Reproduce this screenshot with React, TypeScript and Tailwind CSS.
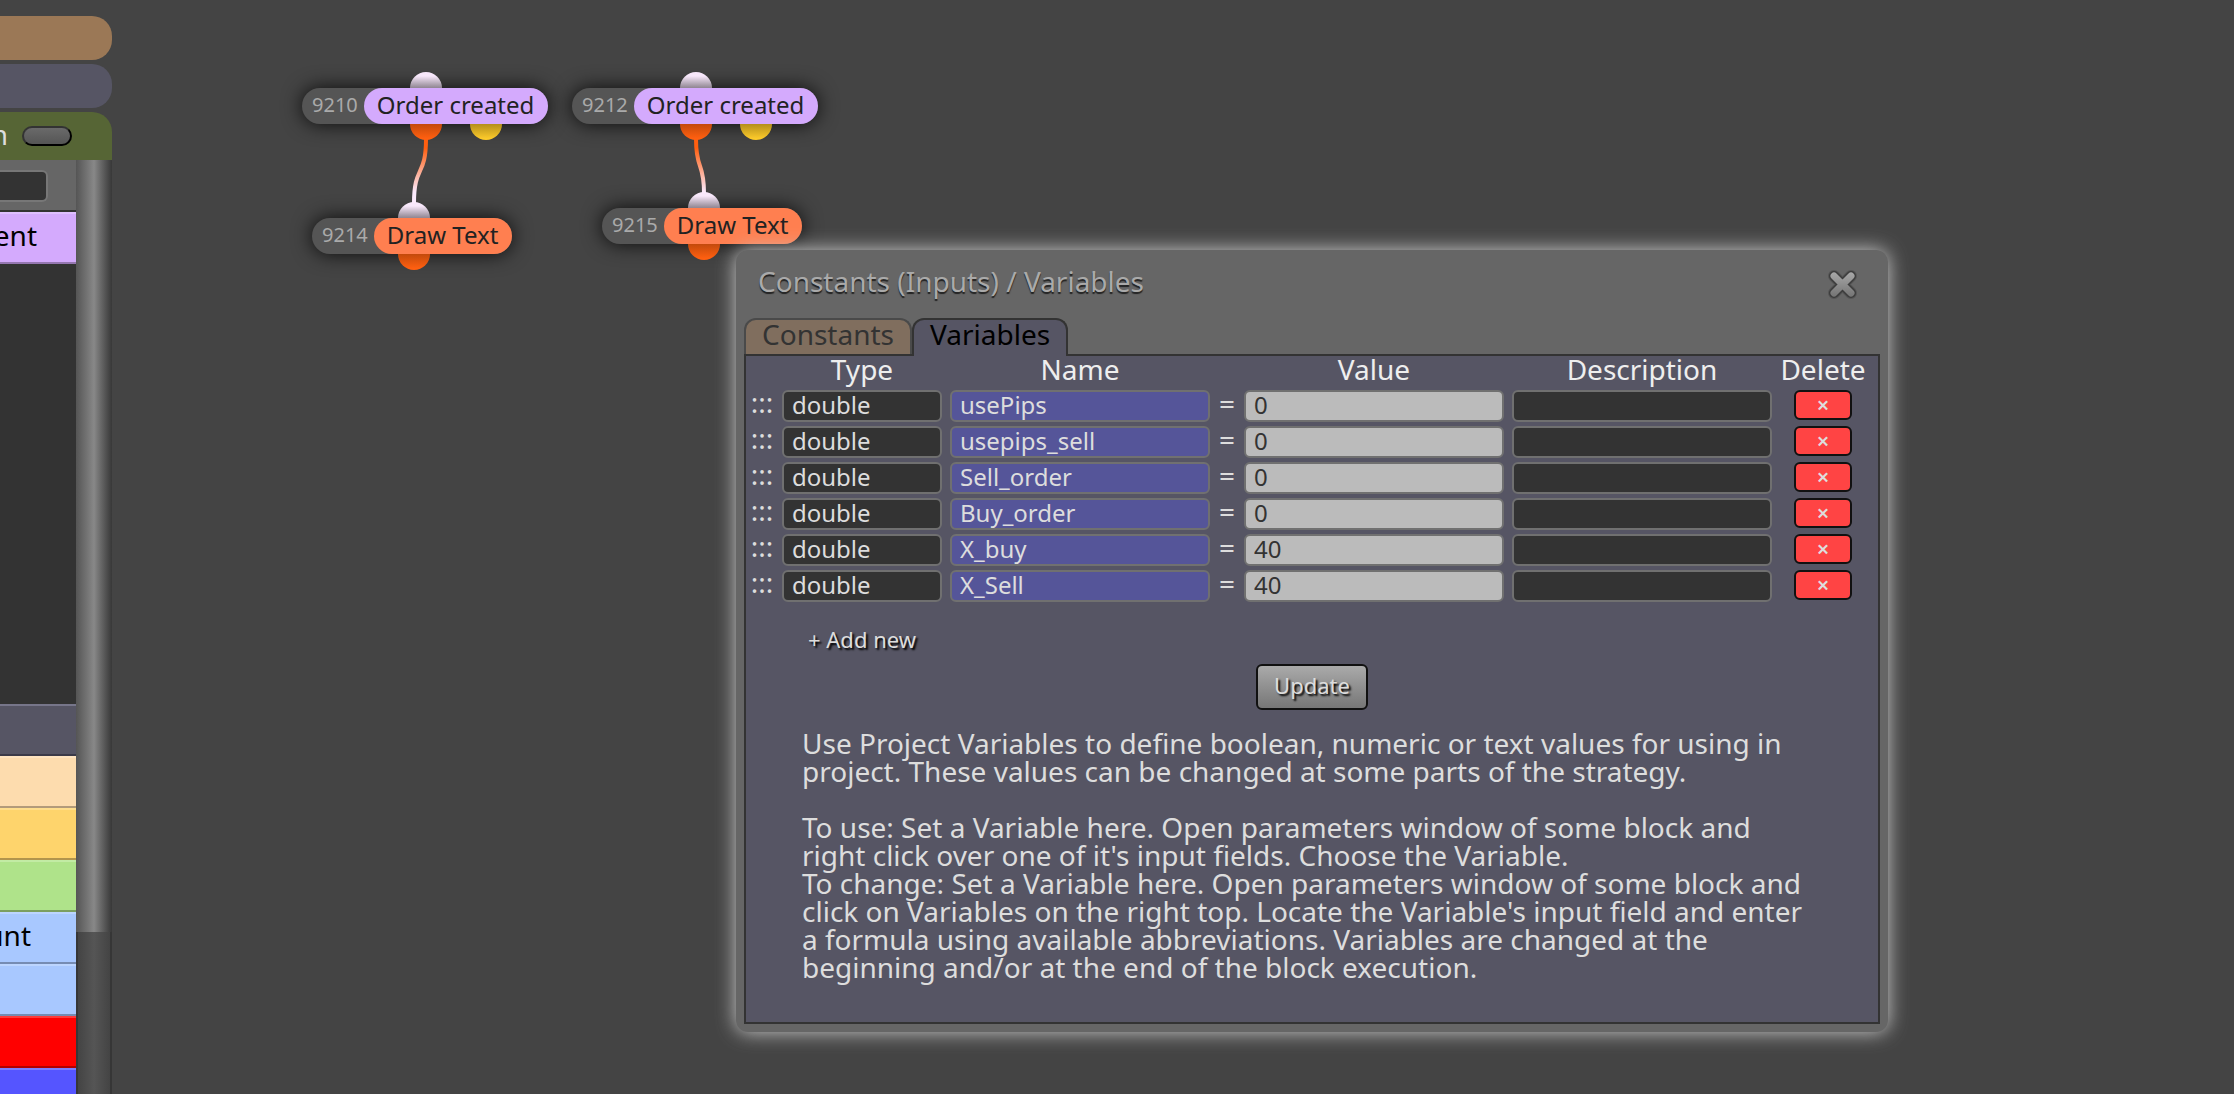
import React from 'react'
import clsx from 'clsx'

const variables = [
    { name: 'usePips', value: '0' },
    { name: 'usepips_sell', value: '0' },
    { name: 'Sell_order', value: '0' },
    { name: 'Buy_order', value: '0' },
    { name: 'X_buy', value: '40' },
    { name: 'X_Sell', value: '40' },
]

const groups = [
    { label: '', color: 'bg-[#565564] border-t-[#77768a] border-b-[#3b3a48]' },
    { label: '', color: 'bg-[#fddcae] border-t-[#ffe4c0] border-b-[#b39b7a]' },
    { label: '', color: 'bg-[#fed46c] border-t-[#ffde8c] border-b-[#b3954c]' },
    { label: '', color: 'bg-[#afe38a] border-t-[#c2eba4] border-b-[#7b9f61]' },
    { label: 'unt', color: 'bg-[#a8c8ff] border-t-[#bcd5ff] border-b-[#768cb3]' },
    { label: '', color: 'bg-[#a8c8ff] border-t-[#bcd5ff] border-b-[#768cb3]' },
    { label: '', color: 'bg-[#ff0000] border-t-[#ff3b3b] border-b-[#b30000]' },
    { label: '', color: 'bg-[#5555ff] border-t-[#7d7dff] border-b-[#3c3cb3]' },
]

function GroupRow({ label, color }: { label: string; color: string }) {
    return (
        <div className={clsx('flex h-[52px] shrink-0 items-center justify-end overflow-hidden border-y-2 pb-[6px] text-[28px] leading-8 text-black', color)}>
            <span className={label === 'ent' ? 'pr-[39px]' : 'pr-[45px]'}>{label}</span>
        </div>
    )
}

function Sidebar() {
    return (
        <aside className="flex w-28 shrink-0 flex-col pt-4">
            <div className="mb-1 h-11 shrink-0 rounded-r-[20px] bg-[#9b7856]" />
            <div className="mb-1 h-11 shrink-0 rounded-r-[20px] bg-[#565564]" />
            <div className="flex h-12 shrink-0 items-center justify-end gap-[14px] overflow-hidden rounded-tr-[20px] bg-[#566535] pr-10">
                <span className="pb-1 text-[28px] leading-8 text-[#dddddd]">n</span>
                <button
                    aria-label="Toggle section"
                    className="h-5 w-[50px] shrink-0 rounded-full border-2 border-t-[#333333] border-r-black border-b-black border-l-[#333333] bg-linear-to-b from-[#6a6a6a] to-[#555555]"
                />
            </div>

            <div className="flex min-h-0 flex-1">
                <div className="flex min-w-0 flex-1 flex-col overflow-hidden bg-[#333333]">
                    <div className="mb-[2px] h-[50px] shrink-0 bg-[#666666] pt-[10px] pr-7">
                        <input aria-label="Search blocks" className="h-8 w-full rounded-r-md border-2 border-l-0 border-[#777777] bg-[#333333]" />
                    </div>
                    <GroupRow label="ent" color="bg-[#d4aafd] border-t-[#dfbfff] border-b-[#9577b1]" />
                    <div className="h-[440px] shrink-0" />
                    {groups.map((group, i) => (
                        <GroupRow key={i} label={group.label} color={group.color} />
                    ))}
                </div>

                {/* Scrollbar */}
                <div className="w-9 shrink-0 border-x-2 border-[#363636] bg-linear-to-r from-[#444444] via-[#555555] to-[#444444]">
                    <div className="-mx-[2px] h-[772px] bg-linear-to-r from-[#555555] via-[#888888] to-[#383838]" />
                </div>
            </div>
        </aside>
    )
}

type BlockProps = {
    id: string
    label: string
    place: string
    color: string
    portX: string
    hasSecondOutput?: boolean
}

function Block({ id, label, place, color, portX, hasSecondOutput }: BlockProps) {
    return (
        <div className={clsx('absolute flex h-9 rounded-full bg-[#555555] shadow-[0_0_20px_rgba(0,0,0,0.85)]', place)}>
            <span className="pr-[6px] pl-[10px] text-xl leading-[34px] text-[#aaaaaa]">{id}</span>
            <span className={clsx('rounded-full pr-[14px] pl-[13px] text-2xl leading-[34px] text-[#222222]', color)}>{label}</span>
            <i className={clsx('absolute -top-4 h-4 w-8 rounded-t-full bg-linear-to-b from-[#f8e8fb] from-25% to-[#8f8591]', portX)} />
            <i className={clsx('absolute top-9 h-4 w-8 rounded-b-full bg-linear-to-b from-[#c34a0c] to-[#ff5f10] to-90%', portX)} />
            {hasSecondOutput && (
                <i className="absolute top-9 left-[168px] h-4 w-8 rounded-b-full bg-linear-to-b from-[#b48f1c] to-[#fbc92a] to-90%" />
            )}
        </div>
    )
}

function Wires() {
    return (
        <svg className="absolute top-0 left-0 h-[300px] w-[800px]" fill="none" strokeWidth="4">
            <defs>
                <linearGradient id="wire" gradientUnits="userSpaceOnUse" x1="0" y1="148" x2="0" y2="192">
                    <stop offset="0" stopColor="#ff5f10" />
                    <stop offset="1" stopColor="#fbeafd" />
                </linearGradient>
            </defs>
            <path d="M426 139C426 177 414 165 414 203" stroke="url(#wire)" />
            <path d="M696 139C696 171 704 161 704 193" stroke="url(#wire)" />
        </svg>
    )
}

function Field({ label, value, tone }: { label: string; value: string; tone: string }) {
    return (
        <input
            aria-label={label}
            defaultValue={value}
            className={clsx('block h-8 w-full rounded-md border-2 border-[#707070] px-2 pb-[3px] text-2xl leading-6', tone)}
        />
    )
}

function VariablesTable() {
    return (
        <table className="w-[1124px] table-fixed text-[28px] text-[#eeeeee]">
            <colgroup>
                <col className="w-8" />
                <col className="w-[168px]" />
                <col className="w-[268px]" />
                <col className="w-[26px]" />
                <col className="w-[268px]" />
                <col className="w-[268px]" />
                <col className="w-[94px]" />
            </colgroup>
            <thead>
                <tr className="h-8 align-top leading-[26px]">
                    <td />
                    <th className="font-normal">Type</th>
                    <th className="font-normal">Name</th>
                    <td />
                    <th className="font-normal">Value</th>
                    <th className="font-normal">Description</th>
                    <th className="font-normal">Delete</th>
                </tr>
            </thead>
            <tbody>
                {variables.map((row) => (
                    <tr key={row.name} className="h-9">
                        <td className="text-center align-top leading-7 text-[#dddddd]">:::</td>
                        <td className="px-1">
                            <Field label="Type" value="double" tone="bg-[#333333] text-[#dddddd]" />
                        </td>
                        <td className="px-1">
                            <Field label="Name" value={row.name} tone="bg-[#555599] text-[#dddddd]" />
                        </td>
                        <td className="text-center align-top leading-[30px] text-[#dddddd]">=</td>
                        <td className="px-1">
                            <Field label="Value" value={row.value} tone="bg-[#bbbbbb] text-[#333333]" />
                        </td>
                        <td className="px-1">
                            <Field label="Description" value="" tone="bg-[#333333] text-[#dddddd]" />
                        </td>
                        <td className="pb-[2px]">
                            <button
                                aria-label={`Delete ${row.name}`}
                                className="mx-auto block h-[30px] w-[58px] rounded-md border-2 border-[#111111] bg-[#ff4444] pb-[2px] text-[22px] leading-6 font-semibold text-[#dddddd]"
                            >
                                ×
                            </button>
                        </td>
                    </tr>
                ))}
            </tbody>
        </table>
    )
}

function CloseIcon() {
    return (
        <svg viewBox="0 0 30 30" className="size-[30px]" fill="none" strokeLinecap="round">
            <defs>
                <linearGradient id="close" gradientUnits="userSpaceOnUse" x1="0" y1="3" x2="0" y2="27">
                    <stop offset="0" stopColor="#a6a6a6" />
                    <stop offset="1" stopColor="#747474" />
                </linearGradient>
            </defs>
            <path d="M6 6L23 23M23 6L6 23" stroke="#555555" strokeWidth="12" />
            <path d="M6 6L23 23M23 6L6 23" stroke="#3c3c3c" strokeWidth="10" />
            <path d="M6 6L23 23M23 6L6 23" stroke="url(#close)" strokeWidth="7" />
        </svg>
    )
}

function VariablesDialog() {
    return (
        <section
            role="dialog"
            aria-labelledby="dialog-title"
            className="absolute top-[250px] left-[736px] w-[1152px] rounded-xl bg-[#666666] px-2 pb-2 shadow-[0_0_20px_#cccccc]"
        >
            <header className="flex h-[68px] items-start justify-between pr-[22px] pl-[14px]">
                <h2 id="dialog-title" className="text-[28px] leading-[62px] text-[#aaaaaa] [text-shadow:0_2px_1px_#222222]">
                    Constants (Inputs) / Variables
                </h2>
                <button aria-label="Close" className="mt-5">
                    <CloseIcon />
                </button>
            </header>

            <div role="tablist" className="flex items-start text-[28px] leading-7">
                <button role="tab" className="h-9 rounded-t-xl border-2 border-b-0 border-[#4a4a4a] bg-[#806e5e] px-4 pb-[6px] text-[#333333]">
                    Constants
                </button>
                <button role="tab" aria-selected="true" className="relative -mb-[2px] h-[38px] rounded-t-xl border-2 border-b-0 border-[#333333] bg-[#565564] px-4 pb-2 text-black">
                    Variables
                </button>
            </div>

            <div className="border-2 border-[#333333] bg-[#565564] pb-[41px]">
                <VariablesTable />
                <div className="px-[62px] pt-5 pb-[2px]">
                    <button className="block text-[22px] leading-[30px] text-[#dddddd] [text-shadow:2px_2px_2px_#000000]">+ Add new</button>
                </div>
                <button className="mx-auto mt-2 block h-[46px] rounded-md border-2 border-[#111111] bg-linear-to-b from-[#aaaaaa] to-[#777777] px-4 pb-1 text-[22px] leading-8 text-[#dddddd] [text-shadow:2px_2px_2px_#000000]">
                    Update
                </button>
                <div className="mt-[19px] pr-16 pl-14 text-[28px] leading-7 text-[#dddddd]">
                    <p className="mb-7">
                        Use Project Variables to define boolean, numeric or text values for using in project. These values can be
                        changed at some parts of the strategy.
                    </p>
                    <p>
                        To use: Set a Variable here. Open parameters window of some block and right click over one of it's input
                        fields. Choose the Variable.
                    </p>
                    <p>
                        To change: Set a Variable here. Open parameters window of some block and click on Variables on the right
                        top. Locate the Variable's input field and enter a formula using available abbreviations. Variables are
                        changed at the beginning and/or at the end of the block execution.
                    </p>
                </div>
            </div>
        </section>
    )
}

export default function App() {
    return (
        <div className="relative flex h-screen w-full overflow-hidden bg-[#444444] font-['Noto_Sans',sans-serif]">
            <Sidebar />

            {/* Block canvas */}
            <main>
                <Block id="9210" label="Order created" place="top-[88px] left-[302px]" color="bg-[#d4aafd]" portX="left-[108px]" hasSecondOutput />
                <Block id="9212" label="Order created" place="top-[88px] left-[572px]" color="bg-[#d4aafd]" portX="left-[108px]" hasSecondOutput />
                <Block id="9214" label="Draw Text" place="top-[218px] left-[312px]" color="bg-[#ff7f50]" portX="left-[86px]" />
                <Block id="9215" label="Draw Text" place="top-[208px] left-[602px]" color="bg-[#ff7f50]" portX="left-[86px]" />
                <Wires />
            </main>

            <VariablesDialog />
        </div>
    )
}
